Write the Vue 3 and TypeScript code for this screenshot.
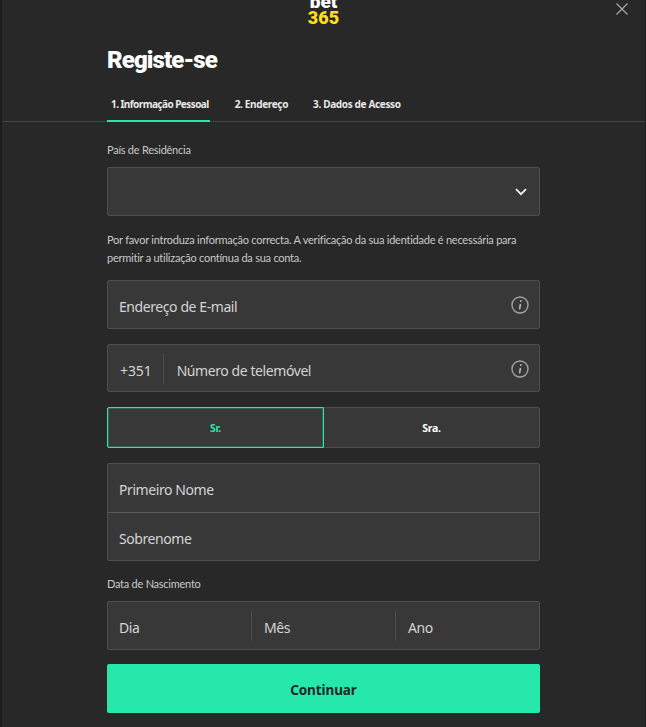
<script setup lang="ts">
const tabs: string[] = ['1. Informação Pessoal', '2. Endereço', '3. Dados de Acesso']
</script>

<template>
  <div class="page">
    <header class="top">
      <div class="logo"><span class="bet">bet</span><span class="n365">365</span></div>
      <svg class="close" width="14" height="14" viewBox="0 0 14 14"><path d="M1.5 1.5l11 11M12.5 1.5l-11 11" stroke="#a8a8a8" stroke-width="1.2" fill="none" /></svg>
    </header>
    <div class="col"><h1 class="title">Registe-se</h1></div>
    <nav class="tabsbar">
      <div class="tabs">
        <div v-for="(t, i) in tabs" :key="t" class="tab" :class="{ active: i === 0 }">{{ t }}</div>
      </div>
    </nav>
    <main class="col form">
      <label class="lab first">País de Residência</label>
      <div class="box select">
        <svg width="12" height="8" viewBox="0 0 12 8"><path d="M1 1.2l5 5 5-5" stroke="#f0f0f0" stroke-width="1.8" fill="none" /></svg>
      </div>
      <p class="note">Por favor introduza informação correcta. A verificação da sua identidade é necessária para permitir a utilização contínua da sua conta.</p>
      <div class="box field mb15">
        <span class="ph low">Endereço de E-mail</span>
        <svg class="info" width="18" height="18" viewBox="0 0 18 18"><circle cx="9" cy="9" r="8" stroke="#a0a0a0" stroke-width="1.4" fill="none" /><path d="M9.8 4.2v1.8M9.5 7.8l-1 5.6" stroke="#b0b0b0" stroke-width="1.7" fill="none" /></svg>
      </div>
      <div class="box field phone mb15">
        <span class="ph code">+351</span>
        <span class="ph num">Número de telemóvel</span>
        <svg class="info" width="18" height="18" viewBox="0 0 18 18"><circle cx="9" cy="9" r="8" stroke="#a0a0a0" stroke-width="1.4" fill="none" /><path d="M9.8 4.2v1.8M9.5 7.8l-1 5.6" stroke="#b0b0b0" stroke-width="1.7" fill="none" /></svg>
      </div>
      <div class="box gender mb15">
        <div class="g on">Sr.</div>
        <div class="g">Sra.</div>
      </div>
      <div class="box names">
        <div class="nrow"><span class="ph low">Primeiro Nome</span></div>
        <div class="nrow last"><span class="ph low">Sobrenome</span></div>
      </div>
      <label class="lab dob">Data de Nascimento</label>
      <div class="box dates">
        <span class="ph d">Dia</span>
        <span class="ph d">Mês</span>
        <span class="ph d">Ano</span>
      </div>
      <button class="cta">Continuar</button>
    </main>
  </div>
</template>

<style scoped>
.page {
  width: 646px;
  height: 727px;
  box-sizing: border-box;
  overflow: hidden;
  background: #282828;
  border-left: 2px solid #1c1c1c;
  border-right: 1px solid #1c1c1c;
  font-family: "Noto Sans", "Open Sans", sans-serif;
  color: #d8d8d8;
}
.top {
  position: relative;
  height: 44px;
}
.logo {
  position: absolute;
  left: 306px;
  top: -6px;
  width: 31px;
  display: flex;
  flex-direction: column;
  align-items: center;
  font-family: "Roboto", sans-serif;
  font-weight: 900;
  font-size: 18px;
  line-height: 16px;
}
.bet { color: #fff; font-size: 19px; }
.n365 { color: #ffdf1b; }
.close { position: absolute; left: 613px; top: 2px; }
.col {
  margin-left: 105px;
  width: 433px;
}
.title {
  margin: 0;
  height: 34px;
  font-family: "Roboto", sans-serif;
  font-weight: 900;
  font-size: 24px;
  letter-spacing: -0.9px;
  line-height: 33px;
  color: #fff;
}
.tabsbar {
  margin-top: 11px;
  height: 32px;
  border-bottom: 1px solid #434343;
  padding-left: 105px;
}
.tabs { display: flex; height: 33px; }
.tab {
  padding: 0 0 0 4px;
  margin-right: 21px;
  height: 31px;
  line-height: 30px;
  font-size: 10px;
  font-weight: 700;
  letter-spacing: -0.35px;
  color: #e8e8e8;
  white-space: nowrap;
}
.tab.active {
  border-bottom: 2px solid #26e8a8;
  padding-right: 1px;
  letter-spacing: -0.55px;
}
.form { display: flex; flex-direction: column; }
.lab {
  display: block;
  font-family: "Lato", sans-serif;
  font-size: 11px;
  letter-spacing: -0.25px;
  color: #c8c8c8;
  height: 17px;
  line-height: 15px;
}
.first { margin-top: 20px; margin-bottom: 8px; }
.box {
  box-sizing: border-box;
  background: #383838;
  border: 1px solid #4e4e4e;
  border-radius: 2px;
}
.select {
  height: 49px;
  display: flex;
  align-items: center;
  justify-content: flex-end;
  padding-right: 12px;
}
.note {
  margin: 15px 0 14px;
  font-family: "Lato", sans-serif;
  font-size: 11px;
  letter-spacing: -0.24px;
  line-height: 17.5px;
  color: #c8c8c8;
  height: 35px;
}
.field {
  height: 49px;
  display: flex;
  align-items: center;
  padding: 1px 10px 0 11px;
}
.phone { height: 48px; padding-left: 12px; }
.phone .info { margin-top: 1px; }
.mb15 { margin-bottom: 15px; }
.ph {
  font-size: 14px;
  letter-spacing: -0.42px;
  color: #d4d4d4;
  white-space: nowrap;
}
.low { padding-top: 2px; }
.code {
  padding: 4px 11px 0 0;
  letter-spacing: -0.1px;
  line-height: 26px;
  border-right: 1px solid #4e4e4e;
}
.num { padding: 4px 0 0 13px; }
.info { margin-left: auto; }
.gender {
  height: 41px;
  display: flex;
}
.g {
  flex: 1;
  text-align: center;
  line-height: 41px;
  font-size: 10.5px;
  font-weight: 700;
  letter-spacing: -0.3px;
  color: #fff;
}
.g.on {
  flex: none;
  width: 217px;
  height: 41px;
  box-sizing: border-box;
  margin: -1px 0 -1px -1px;
  border: 1px solid #26e8a8;
  border-radius: 2px 0 0 2px;
  box-shadow: inset 0 0 0 1px rgba(38, 232, 168, 0.25);
  line-height: 39px;
  padding-top: 1px;
  color: #26e8a8;
}
.names { height: 98px; }
.nrow {
  box-sizing: border-box;
  height: 49px;
  padding: 1px 0 0 11px;
  display: flex;
  align-items: center;
  border-bottom: 1px solid #5a5a5a;
}
.nrow.last { border-bottom: none; height: 47px; }
.dob { margin-top: 15px; margin-bottom: 8px; }
.dates {
  height: 49px;
  padding-top: 1px;
  display: grid;
  grid-template-columns: 144px 144px 1fr;
  align-items: center;
}
.d {
  padding: 4px 0 0 12px;
  line-height: 26px;
  border-right: 1px solid #4e4e4e;
}
.d:first-child { padding-left: 11px; }
.d:last-child { border-right: none; }
.cta {
  margin-top: 14px;
  height: 49px;
  padding: 2px 0 0;
  border: none;
  border-radius: 2px;
  background: #26e8ab;
  font-family: inherit;
  font-size: 13.5px;
  font-weight: 700;
  letter-spacing: -0.1px;
  color: #1f2a26;
}
</style>
